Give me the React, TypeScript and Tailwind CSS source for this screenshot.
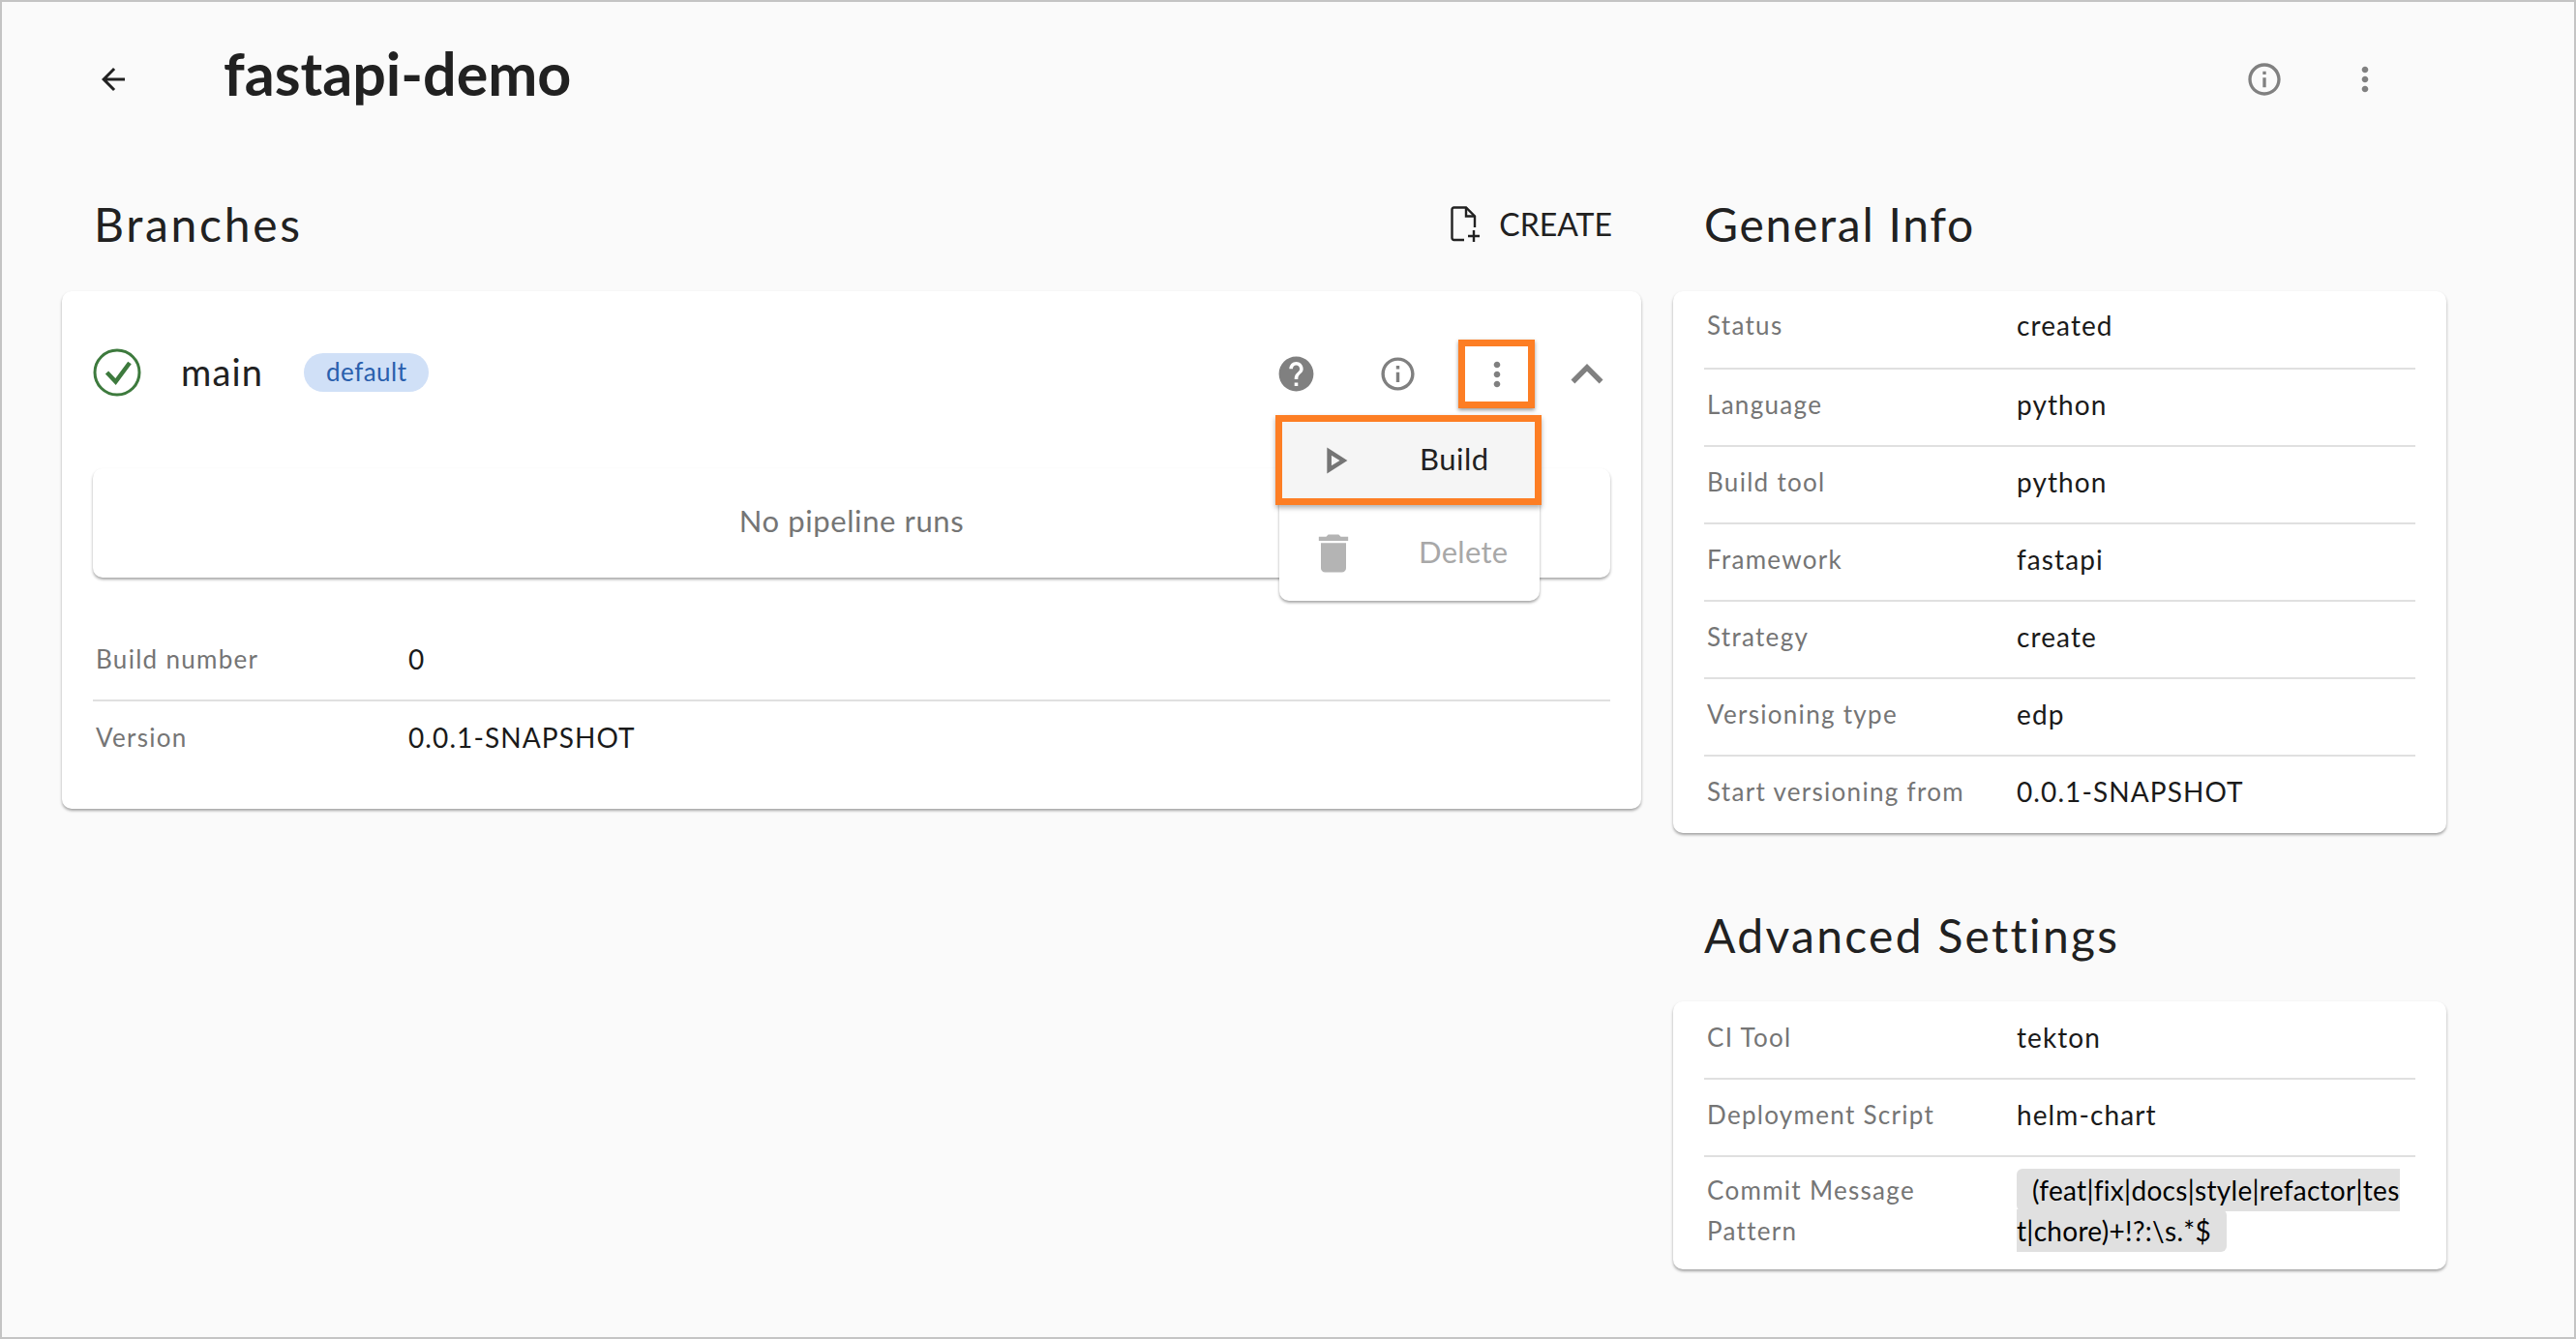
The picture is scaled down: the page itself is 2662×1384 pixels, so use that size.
import type { ReactNode } from "react"

const font = "font-['Lato','Liberation_Sans',sans-serif]"

function Icon({ d, size, color = "#808080" }: { d: string, size: number, color?: string }) {
    return <svg width={size} height={size} viewBox="0 0 24 24" fill={color} className="shrink-0">
        <path d={d} />
    </svg>
}

const icons = {
    back: "M20 11H7.83l5.59-5.59L12 4l-8 8 8 8 1.41-1.41L7.83 13H20v-2z",
    help: "M12 2C6.48 2 2 6.48 2 12s4.48 10 10 10 10-4.48 10-10S17.52 2 12 2zm1 17h-2v-2h2v2zm2.07-7.75l-.9.92C13.45 12.9 13 13.5 13 15h-2v-.5c0-1.1.45-2.1 1.17-2.83l1.24-1.26c.37-.36.59-.86.59-1.41 0-1.1-.9-2-2-2s-2 .9-2 2H8c0-2.21 1.79-4 4-4s4 1.79 4 4c0 .88-.36 1.68-.93 2.25z",
    info: "M11 7h2v2h-2zm0 4h2v6h-2zm1-9C6.48 2 2 6.48 2 12s4.48 10 10 10 10-4.48 10-10S17.52 2 12 2zm0 18c-4.41 0-8-3.59-8-8s3.59-8 8-8 8 3.59 8 8-3.59 8-8 8z",
    more: "M12 8c1.1 0 2-.9 2-2s-.9-2-2-2-2 .9-2 2 .9 2 2 2zm0 2c-1.1 0-2 .9-2 2s.9 2 2 2 2-.9 2-2-.9-2-2-2zm0 6c-1.1 0-2 .9-2 2s.9 2 2 2 2-.9 2-2-.9-2-2-2z",
    less: "M12 8l-6 6 1.41 1.41L12 10.83l4.59 4.58L18 14z",
    play: "M10.4 9.3L14.9 12 10.4 14.7V9.3M8 5v14l11-7L8 5z",
    trash: "M6 19c0 1.1.9 2 2 2h8c1.1 0 2-.9 2-2V7H6v12zM19 4h-3.5l-1-1h-5l-1 1H5v2h14V4z",
}

function Row({ label, children, last, col, height, pb }: { label: ReactNode, children: ReactNode, last?: boolean, col: string, height: string, pb: string }) {
    return <div className={`grid ${col} ${height} ${pb} items-center ${last ? "" : "border-b-2 border-[#e0e0e0]"}`}>
        <div className="pl-[3px] text-[26px] leading-[42px] tracking-[1.3px] text-[#757575]">{label}</div>
        <div className="text-[28px] leading-[42px] tracking-[1.1px] text-[#1a1a1a]">{children}</div>
    </div>
}

function InfoCard({ rows }: { rows: [string, string][] }) {
    return <div className="rounded-[10px] bg-white px-[32px] shadow-[0_2px_3px_rgba(0,0,0,0.35)]">
        {rows.map(([label, value], i) =>
            <Row
                key={label}
                label={label}
                last={i === rows.length - 1}
                col="grid-cols-[323px_1fr]"
                height={i === 0 ? "h-[81px]" : i === rows.length - 1 ? "h-[79px]" : "h-[80px]"}
                pb={i === 0 ? "pb-[10px]" : i === rows.length - 1 ? "pb-[8px]" : "pb-[6px]"}
            >{value}</Row>
        )}
    </div>
}

function Heading({ children, tracking }: { children: ReactNode, tracking: string }) {
    return <h2 className={`text-[48px] font-normal leading-none text-[#212121] ${tracking}`}>{children}</h2>
}

export default function App() {
    return <div className={`${font} box-border h-[1384px] w-[2662px] overflow-hidden border-2 border-[#c4c4c4] bg-[#fafafa]`}>
        <header className="flex h-[160px] items-center pl-[97px]">
            <Icon d={icons.back} size={36} color="#212121" />
            <h1 className="ml-[96px] pb-[14px] text-[61px] font-bold leading-none text-[#212121]">fastapi-demo</h1>
            <div className="ml-auto flex items-center pr-[196px]">
                <Icon d={icons.info} size={40} />
                <div className="ml-[64px]"><Icon d={icons.more} size={40} /></div>
            </div>
        </header>

        <main className="flex items-start pl-[62px]">
            <section className="w-[1632px]">
                <div className="flex h-[139px] items-center justify-between pl-[33px] pr-[30px]">
                    <Heading tracking="tracking-[2.7px]">Branches</Heading>
                    <div className="flex items-center gap-[18px] text-[32px] text-[#212121]">
                        <svg width="32" height="38" viewBox="0 0 32 38" fill="none" stroke="#212121" strokeWidth="2.4" className="shrink-0">
                            <path d="M14 35H3.5a2 2 0 0 1-2-2V3.5a2 2 0 0 1 2-2H16l9 9V22" />
                            <path d="M16 1.5V10.5H25" />
                            <path d="M24 25v12M18 31h12" />
                        </svg>
                        CREATE
                    </div>
                </div>

                <div className="relative h-[535px] rounded-[10px] bg-white px-[32px] pt-[50px] shadow-[0_2px_3px_rgba(0,0,0,0.35)]">
                    <div className="flex h-[71px] items-center">
                        <svg width="50" height="50" viewBox="0 0 50 50" fill="none" stroke="#3d7a3d" className="mb-[3px] shrink-0">
                            <circle cx="25" cy="25" r="23" strokeWidth="3" />
                            <path d="M14.5 25l9 9.5L38 15" strokeWidth="4.5" />
                        </svg>
                        <span className="ml-[41px] pb-[5px] text-[38px] tracking-[1.2px] text-[#212121]">main</span>
                        <span className="ml-[42px] mb-[3px] flex h-[40px] w-[129px] items-center justify-center rounded-[20px] bg-[#d0e0f7] pb-[2px] text-[26px] tracking-[0.5px] text-[#2a5fad]">default</span>
                        <div className="ml-auto flex items-center">
                            <Icon d={icons.help} size={43} />
                            <div className="ml-[63px]"><Icon d={icons.info} size={41} /></div>
                            <div className="ml-[42px] flex h-[71px] w-[79px] items-center justify-center border-[7px] border-[#fd7e24] shadow-[0_2px_4px_rgba(0,0,0,0.4)]">
                                <Icon d={icons.more} size={40} />
                            </div>
                            <div className="ml-[21px] mr-[-9px]"><Icon d={icons.less} size={66} /></div>
                        </div>
                    </div>

                    <div className="mt-[62px] flex h-[113px] items-center justify-center rounded-[10px] bg-white pb-[5px] text-[31px] tracking-[0.6px] text-[#757575] shadow-[0_2px_3px_rgba(0,0,0,0.35)]">
                        No pipeline runs
                    </div>

                    <div className="mt-[44px]">
                        <Row label="Build number" col="grid-cols-[326px_1fr]" height="h-[84px]" pb="pb-[2px]">0</Row>
                        <Row label="Version" last col="grid-cols-[326px_1fr]" height="h-[76px]" pb="pb-[2px]">0.0.1-SNAPSHOT</Row>
                    </div>

                    {/* open menu with the highlighted item */}
                    <div className="absolute left-[1258px] top-[128px] w-[269px] rounded-[10px] bg-white shadow-[0_2px_3px_rgba(0,0,0,0.35)]">
                        <div className="ml-[-4px] mr-[-2px] flex h-[93px] items-center border-[7px] border-[#fd7e24] bg-[#f5f5f5] pl-[31px] text-[31px] tracking-[0.5px] text-[#212121] shadow-[0_3px_5px_rgba(0,0,0,0.3)]">
                            <div className="w-[111px]"><Icon d={icons.play} size={46} color="#757575" /></div>
                            <span className="pb-[3px]">Build</span>
                        </div>
                        <div className="flex h-[99px] items-center pl-[30px] text-[31px] tracking-[0.3px] text-[#a8a8a8]">
                            <div className="w-[114px]"><Icon d={icons.trash} size={52} color="#b4b4b4" /></div>
                            <span className="pb-[2px]">Delete</span>
                        </div>
                    </div>
                </div>
            </section>

            <section className="ml-[33px] w-[799px]">
                <div className="flex h-[139px] items-center pl-[32px]"><Heading tracking="tracking-[1.7px]">General Info</Heading></div>
                <InfoCard rows={[
                    ["Status", "created"],
                    ["Language", "python"],
                    ["Build tool", "python"],
                    ["Framework", "fastapi"],
                    ["Strategy", "create"],
                    ["Versioning type", "edp"],
                    ["Start versioning from", "0.0.1-SNAPSHOT"],
                ]} />

                <div className="flex h-[174px] items-center pl-[32px] pt-[38px]"><Heading tracking="tracking-[2.3px]">Advanced Settings</Heading></div>
                <div className="rounded-[10px] bg-white px-[32px] shadow-[0_2px_3px_rgba(0,0,0,0.35)]">
                    <Row label="CI Tool" col="grid-cols-[323px_1fr]" height="h-[81px]" pb="pb-[6px]">tekton</Row>
                    <Row label="Deployment Script" col="grid-cols-[323px_1fr]" height="h-[80px]" pb="pb-[6px]">helm-chart</Row>
                    <div className="grid h-[116px] grid-cols-[323px_1fr] pt-[13px]">
                        <div className="w-[250px] pl-[3px] text-[26px] leading-[42px] tracking-[1.3px] text-[#757575]">Commit Message Pattern</div>
                        <div className="w-[400px] break-all text-[28px] leading-[42px] tracking-[0.3px] text-black">
                            <code className={`${font} rounded-[6px] bg-[#e0e0e0] px-[16px] py-[5px]`}>{"(feat|fix|docs|style|refactor|test|chore)+!?:\\s.*$"}</code>
                        </div>
                    </div>
                </div>
            </section>
        </main>
    </div>
}
